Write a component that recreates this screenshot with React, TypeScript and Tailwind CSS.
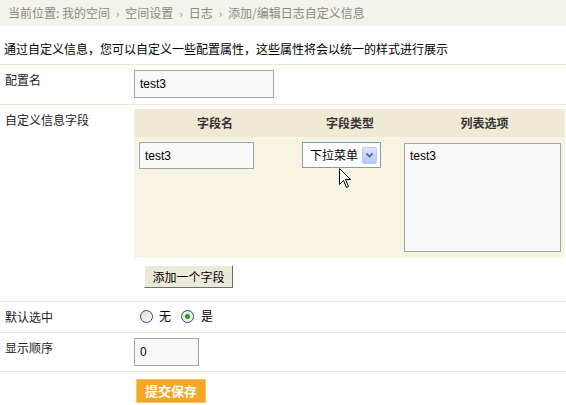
import React from "react";

const cjk = "font-['SimSun','Noto_Sans_CJK_SC',sans-serif]";
const latin = "font-['Liberation_Sans','Noto_Sans_CJK_SC',sans-serif]";

const TextBox = ({ value, className }: { value: string; className: string }) => (
    <div
        className={`${className} ${latin} bg-[#f8f8f8] border border-[#a5a5a5] text-[12px] leading-[14px] text-black pl-[5px] flex items-center`}
    >
        {value}
    </div>
);

const Radio = ({ checked }: { checked?: boolean }) => (
    <span className="w-[13px] h-[13px] rounded-full border border-[#1c5180] bg-gradient-to-br from-[#dcdcd7] to-white flex items-center justify-center">
        {checked && <span className="w-[5px] h-[5px] rounded-full bg-[#21a121]" />}
    </span>
);

// standard arrow pointer
const Pointer = () => (
    <svg width="13" height="21" viewBox="0 0 13 21" className="absolute left-[43px] top-[31px]">
        <path
            d="M0.5 0.5 L0.5 16.5 L4.5 12.5 L7.5 19.5 L9.5 18.5 L6.5 11.5 L11.5 11.5 Z"
            fill="#fff"
            stroke="#000"
            strokeWidth="1"
            strokeLinejoin="miter"
        />
    </svg>
);

const Row = ({ label, children, className }: { label: string; children: React.ReactNode; className: string }) => (
    <div className="flex border-t border-[#ebe5d1]">
        <div className="w-[134px] pl-[5px] pt-[8px] leading-[14px] text-[12px] text-[#222]">{label}</div>
        <div className={`flex-1 ${className}`}>{children}</div>
    </div>
);

export default function App() {
    return (
        <div className={`w-[566px] h-[405px] overflow-hidden bg-white ${cjk}`}>
            <div className="h-[26px] bg-[#f4f2ec] pl-[8px] flex items-center text-[12px] text-[#8a8a7a]">
                <span>当前位置: 我的空间</span>
                <span className="mx-[6px] text-[11px]">›</span>
                <span>空间设置</span>
                <span className="mx-[6px] text-[11px]">›</span>
                <span>日志</span>
                <span className="mx-[6px] text-[11px]">›</span>
                <span>添加/编辑日志自定义信息</span>
            </div>

            <div className="pl-[4px] pt-[16px] pb-[8px] leading-[14px] text-[12px] text-black">
                通过自定义信息，您可以自定义一些配置属性，这些属性将会以统一的样式进行展示
            </div>

            <Row label="配置名" className="pt-[5px] pb-[6px]">
                <TextBox value="test3" className="w-[140px] h-[28px]" />
            </Row>

            <Row label="自定义信息字段" className="pt-[4px] pb-[13px]">
                <div className="w-[431px]">
                    <div className="grid grid-cols-[162px_108px_161px] h-[28px] bg-[#efe9d5] items-center text-center text-[12px] font-bold text-[#333]">
                        <span>字段名</span>
                        <span>字段类型</span>
                        <span>列表选项</span>
                    </div>
                    <div className="grid grid-cols-[162px_108px_161px] h-[121px] bg-[#f7f4e4]">
                        <div className="pt-[5px] pl-[5px]">
                            <TextBox value="test3" className="w-[115px] h-[27px]" />
                        </div>
                        <div className="pt-[5px] pl-[6px] relative">
                            <div className="w-[79px] h-[26px] bg-white border border-[#7f9db9] flex items-center pl-[7px] pr-[3px] text-[12px] text-black">
                                <span className="flex-1">下拉菜单</span>
                                <span className="w-[15px] h-[17px] rounded-[2px] bg-gradient-to-b from-[#d8e4fc] to-[#b4c8f6] border border-[#b9cbf3] flex items-center justify-center">
                                    <svg width="7" height="5" viewBox="0 0 7 5">
                                        <path d="M0.5 0.5 L3.5 3.5 L6.5 0.5" fill="none" stroke="#4d6185" strokeWidth="1.6" />
                                    </svg>
                                </span>
                            </div>
                            <Pointer />
                        </div>
                        <div className="pt-[6px]">
                            <div className={`w-[157px] h-[109px] bg-[#f8f8f8] border border-[#a5a5a5] ${latin} text-[12px] leading-[14px] text-black pl-[5px] pt-[5px]`}>
                                test3
                            </div>
                        </div>
                    </div>
                    <button className="mt-[7px] ml-[10px] h-[23px] w-[89px] bg-[#ece9d8] border border-t-[#fff] border-l-[#fff] border-r-[#716f64] border-b-[#716f64] text-[12px] text-black">
                        添加一个字段
                    </button>
                </div>
            </Row>

            <Row label="默认选中" className="h-[30px] flex items-center pl-[6px] text-[12px] text-black">
                <div className="flex items-center mt-[-2px]">
                    <Radio />
                    <span className="ml-[6px]">无</span>
                    <span className="ml-[10px]" />
                    <Radio checked />
                    <span className="ml-[7px]">是</span>
                </div>
            </Row>

            <Row label="显示顺序" className="pt-[5px] pb-[5px]">
                <TextBox value="0" className="w-[65px] h-[28px]" />
            </Row>

            <Row label="" className="pt-[5px] pl-[2px]">
                <button className="w-[70px] h-[24px] bg-[#f5a623] border border-[#f7c36a] text-white font-bold text-[13px] leading-[14px]">
                    提交保存
                </button>
            </Row>
        </div>
    );
}
